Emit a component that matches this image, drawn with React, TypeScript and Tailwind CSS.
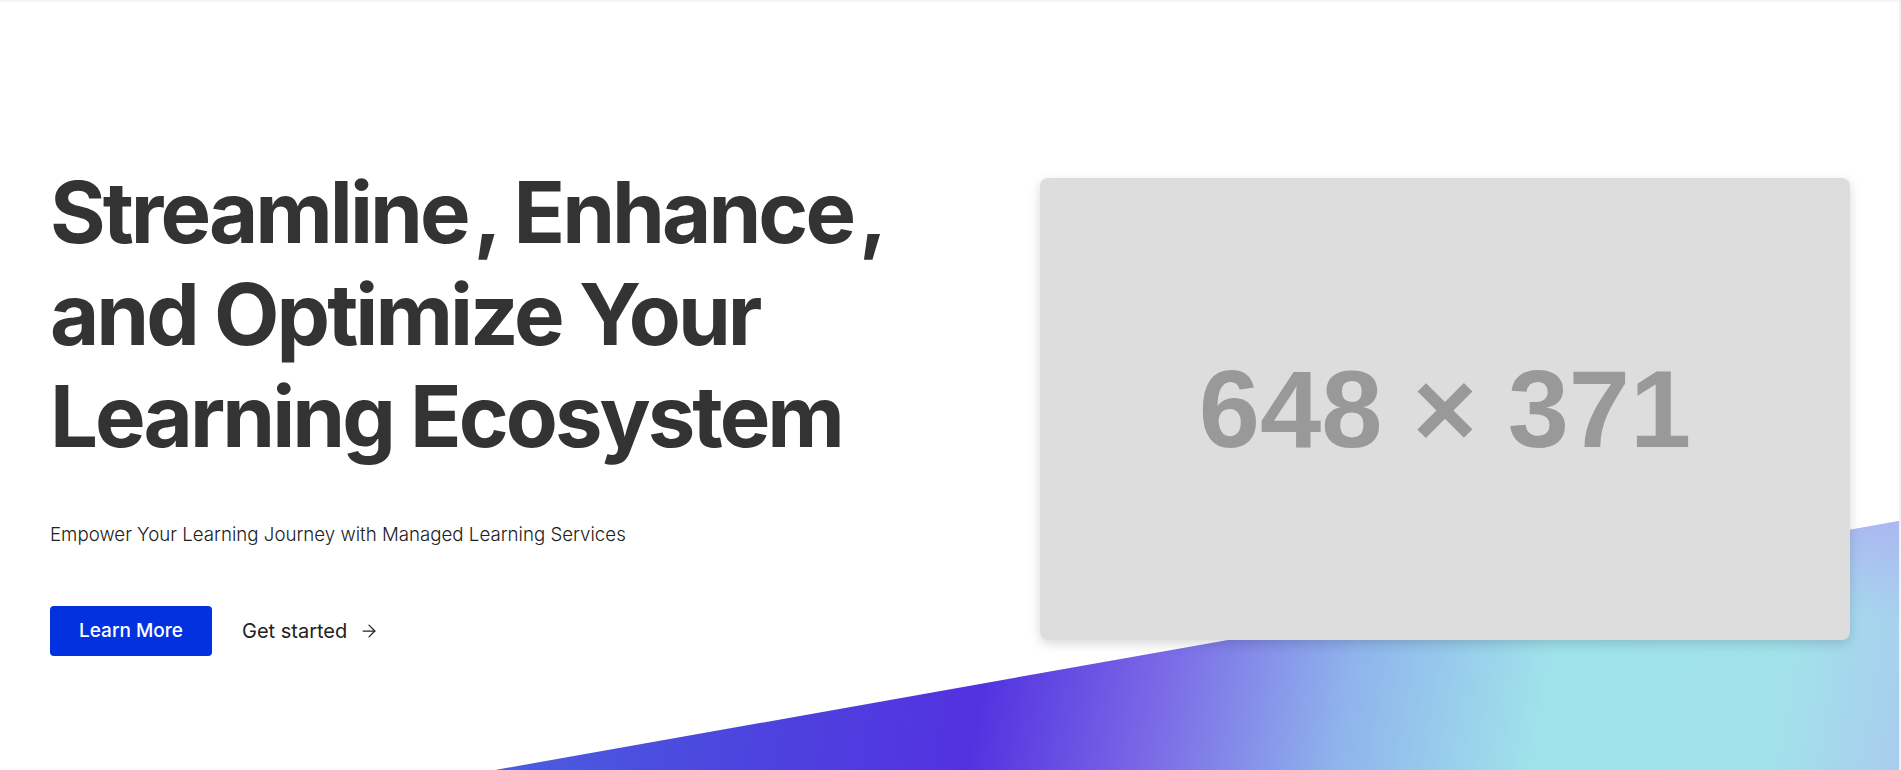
import { ArrowRight } from 'lucide-react';

export default function App() {
  return (
    <div className="flex h-[770px] w-full overflow-hidden bg-white font-['Inter','Liberation_Sans',sans-serif]">
      <main className="relative flex-1 overflow-hidden border-t-2 border-[#f4f4f4]">
        {/* background wave */}
        <div className="absolute inset-x-0 bottom-0 h-[249px] [clip-path:polygon(26.07%_100%,100%_0%,100%_100%)] bg-[radial-gradient(ellipse_at_100%_0%,rgba(172,180,242,0.9),rgba(172,180,242,0)_28%),linear-gradient(100deg,#4a6ade_22%,#4c45de_40%,#5232e0_52%,#7a68e6_61%,#8fb4ec_71%,#9fe2ea_81%,#a2e2ea_93%,#a8cdee_100%)]" />

        <section className="relative z-10 flex items-center justify-between pl-[50px] pr-[49px] pt-[160px]">
          {/* left column */}
          <div className="flex flex-col">
            <h1 className="text-[85px] font-bold leading-[102px] tracking-[-0.035em] text-[#333333]">
              Streamline<span className="ml-[0.07em]">,</span> Enhance<span className="ml-[0.07em]">,</span>
              <br />
              and Optimize Your
              <br />
              Learning Ecosystem
            </h1>
            <p className="mt-[53px] text-[18.7px] font-light leading-[28px] text-[#222222]">
              Empower Your Learning Journey with Managed Learning Services
            </p>
            <div className="mt-[57px] flex items-center gap-[30px]">
              <button className="h-[50px] w-[162px] rounded-[4px] bg-[#0232e0] text-[19px] font-medium text-white">
                Learn More
              </button>
              <button className="flex items-center gap-[12px] text-[20px] text-[#222222]">
                Get started
                <ArrowRight className="h-[20px] w-[20px]" strokeWidth={1.5} />
              </button>
            </div>
          </div>

          {/* placeholder image */}
          <div className="flex h-[462px] w-[810px] items-center justify-center rounded-[8px] bg-[#dddddd] shadow-[0_4px_12px_rgba(0,0,0,0.15)]">
            <span className="font-['Liberation_Sans',Arial,sans-serif] text-[110px] font-bold leading-none text-[#999999]">
              648 × 371
            </span>
          </div>
        </section>
      </main>
      <div className="w-[2px] shrink-0 bg-[#f1f1f1]" />
    </div>
  );
}
